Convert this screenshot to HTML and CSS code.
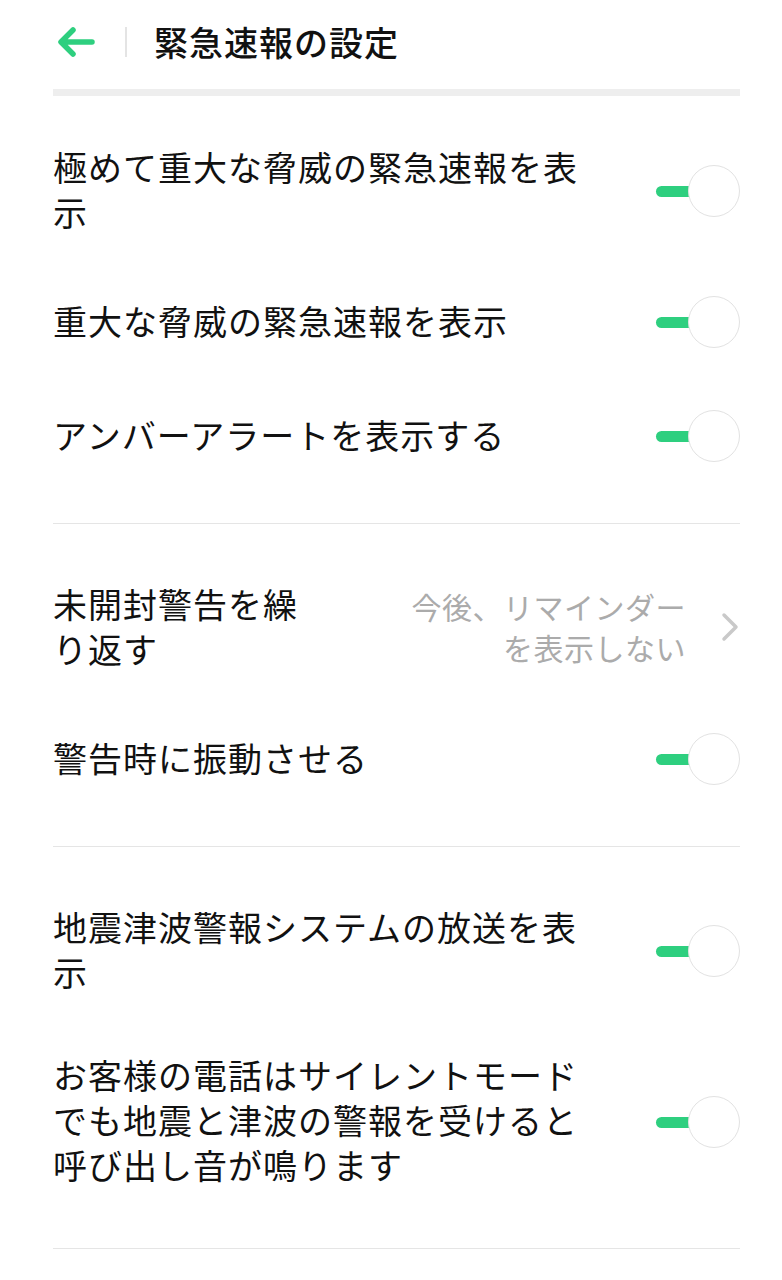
FILE: index.html
```html
<!DOCTYPE html>
<html lang="ja">

<head>
    <meta charset="UTF-8">
    <meta name="viewport" content="width=device-width, initial-scale=1.0">
    <title>緊急速報の設定</title>
    <link rel="stylesheet" href="styles.css">
</head>

<body>
    <div class="header">
        <button class="back-button" aria-label="戻る">
            <svg width="40" height="32" viewBox="0 0 40 32">
                <path d="M36 16 H6 M17 4 L5 16 L17 28" fill="none" stroke="#2ecf7f" stroke-width="5.5"
                    stroke-linecap="round" stroke-linejoin="round" />
            </svg>
        </button>
        <div class="header-divider"></div>
        <h1>緊急速報の設定</h1>
    </div>
    <div class="header-bar"></div>

    <div class="section first">
        <div class="row">
            <div class="row-label">極めて重大な脅威の緊急速報を表示</div>
            <div class="toggle on"><span class="knob"></span></div>
        </div>
        <div class="row">
            <div class="row-label">重大な脅威の緊急速報を表示</div>
            <div class="toggle on"><span class="knob"></span></div>
        </div>
        <div class="row">
            <div class="row-label">アンバーアラートを表示する</div>
            <div class="toggle on"><span class="knob"></span></div>
        </div>
    </div>

    <div class="section">
        <div class="row">
            <div class="row-label narrow">未開封警告を繰り返す</div>
            <div class="row-value">
                <span class="value-text">今後、リマインダーを表示しない</span>
                <svg class="chevron" width="20" height="32" viewBox="0 0 20 32">
                    <path d="M4 4 L16 16 L4 28" fill="none" stroke="#c9c9c9" stroke-width="3.5"
                        stroke-linecap="round" stroke-linejoin="round" />
                </svg>
            </div>
        </div>
        <div class="row">
            <div class="row-label">警告時に振動させる</div>
            <div class="toggle on"><span class="knob"></span></div>
        </div>
    </div>

    <div class="section">
        <div class="row">
            <div class="row-label">地震津波警報システムの放送を表示</div>
            <div class="toggle on"><span class="knob"></span></div>
        </div>
        <div class="row">
            <div class="row-label">お客様の電話はサイレントモードでも地震と津波の警報を受けると呼び出し音が鳴ります</div>
            <div class="toggle on"><span class="knob"></span></div>
        </div>
    </div>
</body>
</html>
```

FILE: styles.css
```css
/* Global styles */
* {
    box-sizing: border-box;
    margin: 0;
    padding: 0;
}

body {
    background-color: #ffffff;
    color: #111111;
    font-family: "Noto Sans CJK JP", "Noto Sans", sans-serif;
    width: 782px;
}

/* Header */
.header {
    height: 89px;
    display: flex;
    align-items: center;
    padding-left: 56px;
    padding-bottom: 6px;
}

.back-button {
    background: none;
    border: none;
    width: 40px;
    height: 32px;
    display: flex;
    align-items: center;
}

.header-divider {
    width: 2px;
    height: 30px;
    background-color: #e4e4e4;
    margin-left: 29px;
    margin-right: 27px;
}

.header h1 {
    font-size: 34px;
    font-weight: 500;
    letter-spacing: 1px;
    line-height: 45px;
}

.header-bar {
    height: 7px;
    background-color: #eeeeee;
    margin: 0 42px 0 53px;
}

/* Sections */
.section {
    margin: 0 42px 0 53px;
    padding: 30px 0;
    border-bottom: 1px solid #e5e5e5;
}

.section.first {
    padding-top: 21px;
}

.row {
    min-height: 114px;
    padding: 27px 0 31px;
    display: flex;
    justify-content: space-between;
    align-items: center;
}

.row-label {
    width: 530px;
    font-size: 34px;
    line-height: 45px;
    letter-spacing: 1px;
}

.row-label.narrow {
    width: 250px;
}

.row-value {
    display: flex;
    align-items: center;
    margin-top: 2px;
}

.value-text {
    width: 290px;
    text-align: right;
    font-size: 30px;
    line-height: 41px;
    color: #ababab;
    letter-spacing: 0.5px;
}

.chevron {
    margin-left: 34px;
}

/* Toggle switch */
.toggle {
    position: relative;
    width: 84px;
    height: 52px;
    flex-shrink: 0;
    margin-top: 4px;
}

.toggle::before {
    content: "";
    position: absolute;
    left: 0;
    top: 21px;
    width: 46px;
    height: 11px;
    border-radius: 6px;
    background-color: #d9d9d9;
}

.toggle.on::before {
    background-color: #2ecf7f;
}

.toggle .knob {
    position: absolute;
    right: 0;
    top: 0;
    width: 52px;
    height: 52px;
    border-radius: 50%;
    background-color: #ffffff;
    border: 1.5px solid #e2e2e2;
}
```
